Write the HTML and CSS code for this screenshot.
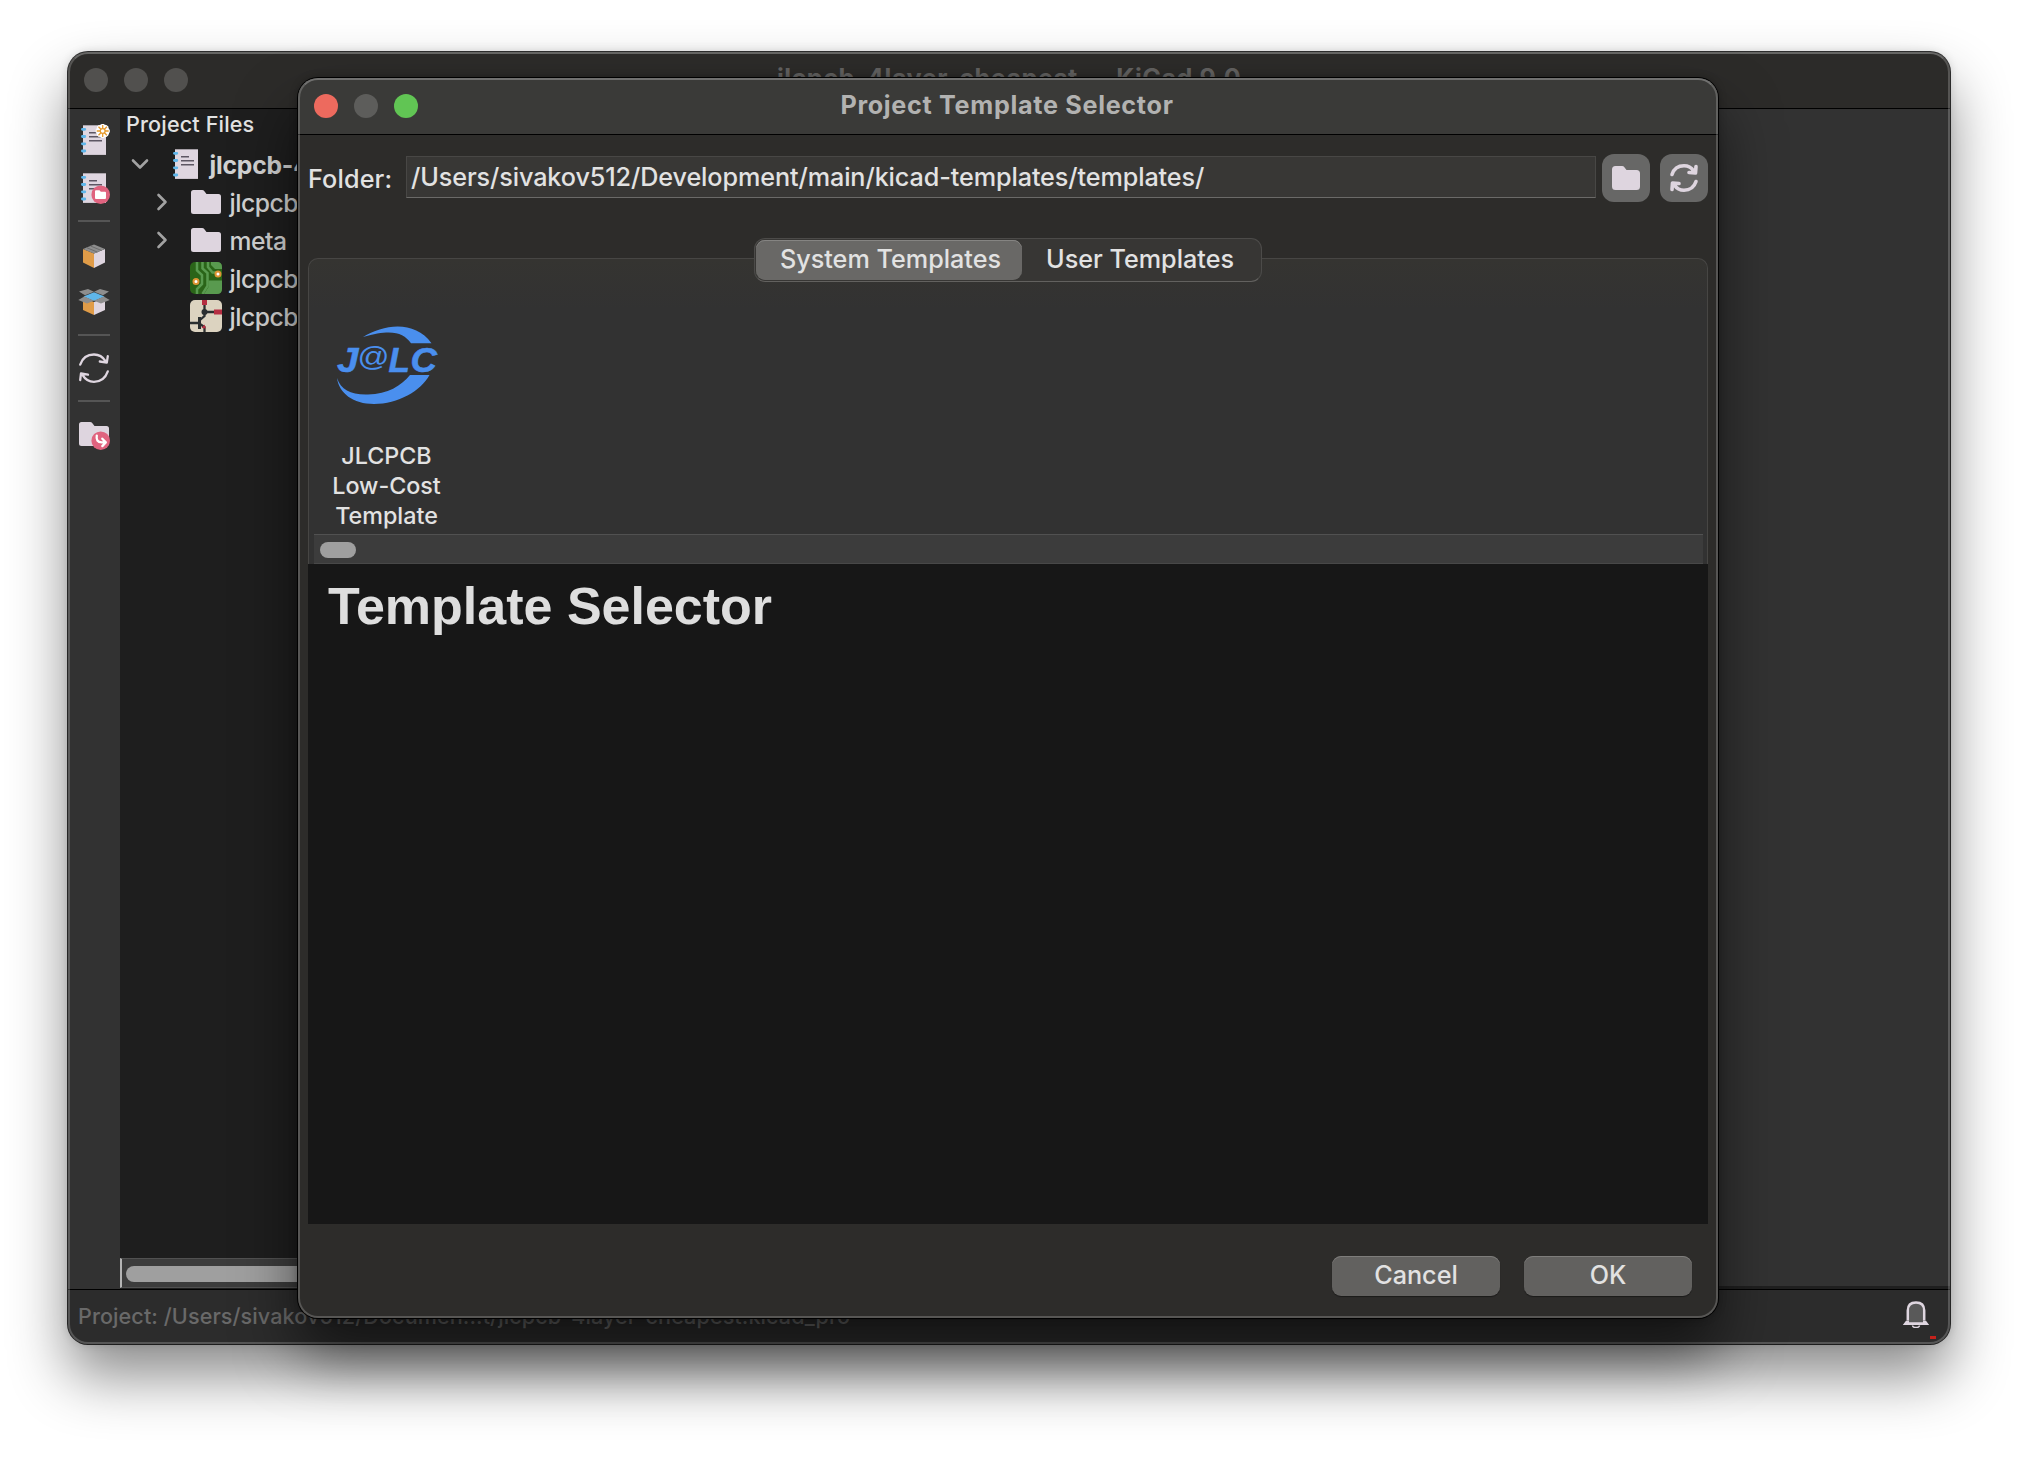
FILE: index.html
```html
<!DOCTYPE html>
<html lang="en">
<head>
<meta charset="utf-8">
<title>Project Template Selector</title>
<link rel="stylesheet" href="styles.css">
</head>
<body>
<svg class="defs" aria-hidden="true">
  <defs>
    <g id="book">
      <path d="M5 1.3h23v29.6H5z" fill="#dfd6e0"/>
      <g stroke="#5fb6ea" stroke-width="2.8" stroke-linecap="round">
        <path d="M4.4 5.3h2.4M4.4 12.5h2.4M4.4 19.8h2.4M4.4 27h2.4"/>
      </g>
      <path d="M11 8.8h8M11 12.7h13M11 16.7h13" stroke="#5d5663" stroke-width="1.4"/>
    </g>
    <path id="folder" d="M1 6.500Q1 4 3.500 4H12q1.600 0 2.400 1.200L16.500 8H28.500Q31 8 31 10.500V25.500Q31 28 28.500 28H3.500Q1 28 1 25.500z" fill="#ded5df"/>
  </defs>
</svg>

<div class="desktop">
  <section class="window main-window">
    <header class="titlebar">
      <div class="lights"><i></i><i></i><i></i></div>
      <h1 class="main-title">jlcpcb-4layer-cheapest — KiCad 9.0</h1>
    </header>
    <div class="workspace">
      <nav class="toolbar">
        <svg width="32" height="32" viewBox="0 0 32 32"><use href="#book"/>
          <circle cx="24.700" cy="7" r="6.800" fill="#fff"/>
          <path d="M24.700 0v14M17.700 7h14M19.800 2.100l9.800 9.800M29.600 2.100l-9.800 9.800" stroke="#fff" stroke-width="2.800"/>
          <path d="M24.700 1v12M18.700 7h12M20.500 2.800l8.400 8.400M28.900 2.800l-8.400 8.400" stroke="#e79a2c" stroke-width="1.300"/>
          <circle cx="24.700" cy="7" r="2.400" fill="#fff" stroke="#e79a2c" stroke-width="1.200"/>
        </svg>
        <svg width="32" height="32" viewBox="0 0 32 32"><use href="#book"/>
          <circle cx="22.700" cy="22.700" r="9.300" fill="#e0637f"/>
          <path d="M17 19.200q0-1 1-1h3.500l1.300 1.600H27q1 0 1 1V26q0 1-1 1h-9q-1 0-1-1z" fill="#fff"/>
        </svg>
        <hr>
        <svg width="32" height="32" viewBox="0 0 32 32">
          <path d="M5 11l11 4.500V30L5 24.500z" fill="#e09c48"/><path d="M27 11l-11 4.500V30l11-5.500z" fill="#dfd6e0"/>
          <path d="M5 11l11-4.500L27 11l-11 4.500z" fill="#8e8e8e"/><path d="M8.500 9.600l11 4.500M12.500 8l11 4.500" stroke="#6c6c6c" stroke-width="1"/>
        </svg>
        <svg width="32" height="32" viewBox="0 0 32 32">
          <path d="M5 12l11 4v13L5 24z" fill="#e09c48"/><path d="M27 12l-11 4v13l11-5z" fill="#dfd6e0"/>
          <path d="M5.500 10.500L16 6.300l10.500 4.200L16 15z" fill="#5fb6ea"/>
          <path d="M1 5.500L10 3l6 2.800-9 3.500zM31 5.500L22 3l-6 2.800 9 3.500zM.3 14l6-3.500L16 14.800 9 17.500zM31.700 14l-6-3.500L16 14.800l7 2.700z" fill="#8e8e8e"/>
        </svg>
        <hr>
        <svg width="32" height="32" viewBox="0 0 32 32" fill="none" stroke="#dfd6e0" stroke-width="2.300" stroke-linecap="round" stroke-linejoin="round">
          <path d="M2.200 12.600C4.500 5.800 9.500 2.500 16 2.500c5 0 9 2.600 11.500 6.700M29.800 4.200l-1 6.500-7-1.200M29.800 19.400C27.500 26 22.500 29.800 16 29.800c-5 0-9-2.600-11.500-6.900M2.200 28l.8-6.500 7 1.200"/>
        </svg>
        <hr>
        <svg width="32" height="32" viewBox="0 0 32 32"><use href="#folder"/>
          <circle cx="22.700" cy="22.700" r="9.300" fill="#e0637f"/>
          <path d="M18.800 17.600c-.8 4 .7 6.800 5 6.800h3M24.300 20.700l3.500 3.700-3.500 3.700" fill="none" stroke="#fff" stroke-width="2.300" stroke-linejoin="round" stroke-linecap="round"/>
        </svg>
      </nav>
      <aside class="files">
        <h2>Project Files</h2>
        <ul class="tree">
          <li class="root"><svg class="chev" width="18" height="18" viewBox="0 0 18 18"><path d="M2 5.500l7 7 7-7"/></svg><svg width="32" height="32" viewBox="0 0 32 32"><use href="#book"/></svg><b>jlcpcb-4layer-cheapest</b></li>
          <li><svg class="chev" width="18" height="18" viewBox="0 0 18 18"><path d="M5.500 2l7 7-7 7"/></svg><svg width="32" height="32" viewBox="0 0 32 32"><use href="#folder"/></svg><span>jlcpcb-4layer</span></li>
          <li><svg class="chev" width="18" height="18" viewBox="0 0 18 18"><path d="M5.500 2l7 7-7 7"/></svg><svg width="32" height="32" viewBox="0 0 32 32"><use href="#folder"/></svg><span>meta</span></li>
          <li><i class="chev"></i><svg width="32" height="32" viewBox="0 0 32 32">
            <rect width="32" height="32" rx="5" fill="#2a6418"/>
            <path d="M18.500 18.500H32V27q0 5-5 5H14l4.500-7zM21 0h6q5 0 5 5v2h-7l-4-4z" fill="#599a4f"/>
            <path d="M7 0v8.500l5 4.500v9l-5 5v5M12.500 0v6.500l5 4.500v13l-5 8M18 0v5l4.500 5.500H28" fill="none" stroke="#599a4f" stroke-width="2.500"/>
            <g fill="#fff" stroke="#dd9433" stroke-width="2"><circle cx="6" cy="19.500" r="2.500"/><circle cx="28" cy="12" r="2.500"/></g>
          </svg><span>jlcpcb-4layer</span></li>
          <li><i class="chev"></i><svg width="32" height="32" viewBox="0 0 32 32">
            <rect width="32" height="32" rx="5" fill="#dcd3c0"/>
            <path d="M14.500 5v11l-4.500 4M14.500 12H25M0 23h10M14.500 32v-5l-4.500-3" fill="none" stroke="#2b2f30" stroke-width="2.300"/>
            <path d="M9.500 17v12" stroke="#2b2f30" stroke-width="3"/><circle cx="14.500" cy="12" r="3" fill="#2b2f30"/>
            <path d="M12 0h5v5h-5zM24 9.500h8v5h-8zM11.500 28l3-3.500 1.500 4z" fill="#b52e42"/>
          </svg><span>jlcpcb-4layer</span></li>
        </ul>
        <div class="tree-scroll"><i></i></div>
      </aside>
      <main class="content"></main>
    </div>
    <footer class="status">
      <span>Project: /Users/sivakov512/Documen...t/jlcpcb-4layer-cheapest.kicad_pro</span>
      <div class="bell">
        <svg width="28" height="28" viewBox="0 0 28 28"><path d="M5.700 20V10.500C5.700 5.200 9 2.300 14 2.300s8.300 2.900 8.300 8.200V20l2.700 4.300H3z" fill="#595959"/><path d="M5.800 20.500v-10C5.800 5.200 9 2.500 14 2.500s8.200 2.700 8.200 8v10" fill="none" stroke="#dfd6e0" stroke-width="2.500"/><path d="M4 20.700h3v1.600h14v-1.600h3l3.200 4.300H.8z" fill="#dfd6e0"/><path d="M10.500 25.500a3.500 2 0 0 0 7 0" fill="none" stroke="#dfd6e0" stroke-width="1.500"/></svg>
        <i class="badge"></i>
      </div>
    </footer>
  </section>

  <section class="window dialog">
    <header class="titlebar">
      <div class="lights"><i class="close"></i><i></i><i class="zoom"></i></div>
      <h1>Project Template Selector</h1>
    </header>
    <div class="body">
      <div class="folder-row">
        <label>Folder:</label>
        <div class="path">/Users/sivakov512/Development/main/kicad-templates/templates/</div>
        <button class="square"><svg width="32" height="32" viewBox="0 0 32 32"><path d="M2 7.500Q2 4 5.500 4H12q1.600 0 2.400 1.200L16.500 8H26.500Q30 8 30 11.500V24.500Q30 28 26.500 28H5.500Q2 28 2 24.500z" fill="#ded5df"/></svg></button>
        <button class="square"><svg width="32" height="32" viewBox="0 0 32 32" fill="none" stroke="#ded5df" stroke-width="3.600" stroke-linecap="round" stroke-linejoin="round">
          <path d="M4 12.500C6 6.500 10.500 3.800 16 3.800c4.500 0 7.500 2 9.500 5M4 27.500l.5-6.500 6.500.500M28 19.500C26 25.500 21.500 28.200 16 28.200c-4.500 0-7.500-2-9.500-5M28 4.500l-.5 6.500-6.500-.5"/></svg></button>
      </div>
      <div class="notebook">
        <div class="tabs">
          <div class="tab active">System Templates</div>
          <div class="tab">User Templates</div>
        </div>
        <div class="panel">
          <div class="template">
            <svg class="logo" width="116" height="90" viewBox="330 320 116 90" fill="#4a8fee">
              <path d="M364 337C385 324 416 320 432.500 343.300H412C404 332 392 329 364 337z"/>
              <path d="M338 378C342 390 352 395 369 394.500C389 394 402 386 411 375H430.500C422 391 399 404 375 404C354 404 340 393 338 378z"/>
              <g font-family="Liberation Sans, Arial, sans-serif" font-style="italic" font-weight="700" font-size="35" stroke="#4a8fee" stroke-width=".5">
                <text x="338" y="372" textLength="21.500" lengthAdjust="spacingAndGlyphs">J</text><text x="389.500" y="372">L</text><text x="411.500" y="372" textLength="26.500" lengthAdjust="spacingAndGlyphs">C</text>
                <text x="358" y="366" font-size="28" font-weight="400" stroke="none" textLength="32" lengthAdjust="spacingAndGlyphs">@</text>
              </g>
            </svg>
            <p>JLCPCB<br>Low-Cost<br>Template</p>
          </div>
          <div class="panel-scroll"><i></i></div>
        </div>
      </div>
      <article class="preview"><h2>Template Selector</h2></article>
      <div class="actions"><button>Cancel</button><button>OK</button></div>
    </div>
  </section>
</div>
</body>
</html>
```
FILE: styles.css
```css
* { box-sizing: border-box; }
body { margin: 0; background: #fff; font-family: Inter, "Liberation Sans", sans-serif; font-size: 25.2px; font-weight: 450; color: #e2e2e2; }
h1, h2, p, ul { margin: 0; padding: 0; font-weight: inherit; font-size: inherit; list-style: none; }
.defs { position: absolute; width: 0; height: 0; }
svg { display: block; flex: none; }
.desktop { position: relative; width: 2018px; height: 1466px; overflow: hidden; }
.window { position: absolute; display: flex; flex-direction: column; border-radius: 20px; }
.window::after { content: ""; position: absolute; inset: 0; border: 2px solid rgba(255, 255, 255, .2); border-top-color: rgba(255, 255, 255, .28); border-radius: inherit; pointer-events: none; }
.titlebar { position: relative; flex: none; border-bottom: 1px solid #000; border-radius: 20px 20px 0 0; text-align: center; font-weight: 700; }
.lights { position: absolute; display: flex; gap: 16px; }
.lights i { width: 24px; height: 24px; border-radius: 50%; background: #51504e; }

.main-window { left: 68px; top: 52px; width: 1882px; height: 1292px; background: #323232; box-shadow: 0 0 0 1px rgba(0, 0, 0, .8), 0 0 10px rgba(0, 0, 0, .15), 0 32px 58px rgba(0, 0, 0, .46); }
.main-window .titlebar { height: 57px; background: #2c2b29; color: #636261; }
.main-window .lights { left: 16px; top: 16px; }
.main-title { line-height: 52px; white-space: nowrap; letter-spacing: .48px; }
.workspace { flex: 1; display: flex; min-height: 0; }
.toolbar { width: 52px; padding-top: 15px; display: flex; flex-direction: column; align-items: center; gap: 16px; background: #323232; }
.toolbar hr { width: 32px; height: 2px; margin: 0; border: 0; background: #555; }
.files { width: 400px; display: flex; flex-direction: column; background: #1e1e1e; overflow: hidden; white-space: nowrap; }
.files h2 { height: 36px; padding-left: 6px; line-height: 30px; font-size: 21.6px; letter-spacing: .15px; }
.tree { flex: 1; }
.tree li { display: flex; align-items: center; height: 38px; padding-left: 33px; line-height: 38px; font-size: 24.7px; letter-spacing: -.5px; color: #d2d2d2; }
.tree li.root { padding-left: 11px; letter-spacing: -.2px; }
.tree .chev { width: 18px; height: 18px; margin-right: 19px; fill: none; stroke: #a2a2a2; stroke-width: 2.6; stroke-linecap: round; stroke-linejoin: round; }
.tree .root .chev { margin-right: 21px; }
.tree li > :last-child { padding-top: 2px; margin-left: 7.5px; }
.tree-scroll { height: 30px; margin-bottom: 1px; padding: 7px 0 0 4px; border-left: 2px solid #b4b4b4; border-top: 1px solid #515151; border-bottom: 1px solid #515151; background: #3c3c3c; }
.tree-scroll i { display: block; width: 390px; height: 16px; border-radius: 8px; background: #9f9f9f; }
.content { flex: 1; border-bottom: 3px solid #1f1f1f; }
.status { display: flex; justify-content: space-between; height: 55px; padding: 0 20px 0 10px; border-top: 1px solid #000; border-radius: 0 0 20px 20px; background: #2c2c2c; color: #696969; font-size: 21.6px; letter-spacing: .08px; line-height: 52px; white-space: nowrap; }
.bell { position: relative; padding-top: 10px; }
.badge { position: absolute; right: -6px; bottom: 5px; width: 6px; height: 3px; background: #c4221c; }

.dialog { left: 298px; top: 78px; width: 1420px; height: 1240px; background: #2d2c2a; box-shadow: 0 0 0 1px #000, 0 0 8px rgba(0, 0, 0, .3), 0 36px 60px rgba(0, 0, 0, .55); }
.dialog .titlebar { height: 57px; background: #3a3a38; color: #b2b2b1; }
.dialog .titlebar h1 { padding-right: 2px; line-height: 55px; letter-spacing: .68px; }
.dialog .lights { left: 16px; top: 16px; }
.dialog .lights i { background: #5d5d5b; }
.dialog .lights .close { background: #ed6a5e; }
.dialog .lights .zoom { background: #61c554; }
.body { flex: 1; display: flex; flex-direction: column; padding: 19px 10px 0; }
.folder-row { display: flex; align-items: center; height: 48px; flex: none; }
.folder-row label { width: 98px; padding-top: 2px; letter-spacing: .15px; }
.path { flex: 1; height: 42px; margin: 0 6px 2px 0; padding-left: 4px; border: 1px solid #484745; border-bottom: 1px solid #6b6a68; background: #383735; line-height: 41px; letter-spacing: -.1px; white-space: nowrap; }
button { padding: 0; border: 0; font: inherit; color: inherit; }
.square { display: grid; place-items: center; width: 48px; height: 48px; border-radius: 12px; background: #676766; }
.square + .square { margin-left: 10px; }
.notebook { flex: none; margin-top: 36px; height: 326px; }
.tabs { position: relative; z-index: 1; display: flex; width: 508px; height: 44px; margin: 0 auto; border: 1px solid #4c4b49; border-bottom-color: #62615f; border-radius: 11px; padding: 1px; background: #373634; line-height: 39px; text-align: center; }
.tab { flex: 1; padding-right: 2px; }
.tab.active { flex: 0 0 266px; padding: 0 0 0 3px; border-radius: 9px; background: #696866; box-shadow: inset 0 1px #858482; }
.panel { display: flex; flex-direction: column; justify-content: space-between; height: 306px; margin-top: -24px; padding: 0 4px 0 5px; border: 1px solid #474644; border-bottom: 0; border-radius: 10px 10px 0 0; background: linear-gradient(#353431, #323232 50px); }
.template { width: 146px; padding-top: 61px; display: flex; flex-direction: column; align-items: center; }
.template p { margin: 31px 1px 0 0; font-size: 23.3px; line-height: 30px; text-align: center; white-space: nowrap; }
.panel-scroll { height: 30px; padding: 7px 6px; border-top: 1px solid #515151; border-bottom: 1px solid #484848; background: #3c3c3c; }
.panel-scroll i { display: block; width: 36px; height: 16px; border-radius: 8px; background: #9f9f9f; }
.preview { height: 660px; flex: none; padding: 15px 20px; background: #171717; }
.preview h2 { font: 700 52px/55px "Liberation Sans", Arial, sans-serif; color: #dedede; }
.actions { display: flex; justify-content: flex-end; gap: 24px; padding: 32px 16px 0; }
.actions button { width: 168px; height: 40px; padding-bottom: 2px; border-radius: 9px; background: #62615f; box-shadow: inset 0 1px #7e7d7b, 0 1px 1px rgba(0, 0, 0, .4); line-height: 36px; }
```
